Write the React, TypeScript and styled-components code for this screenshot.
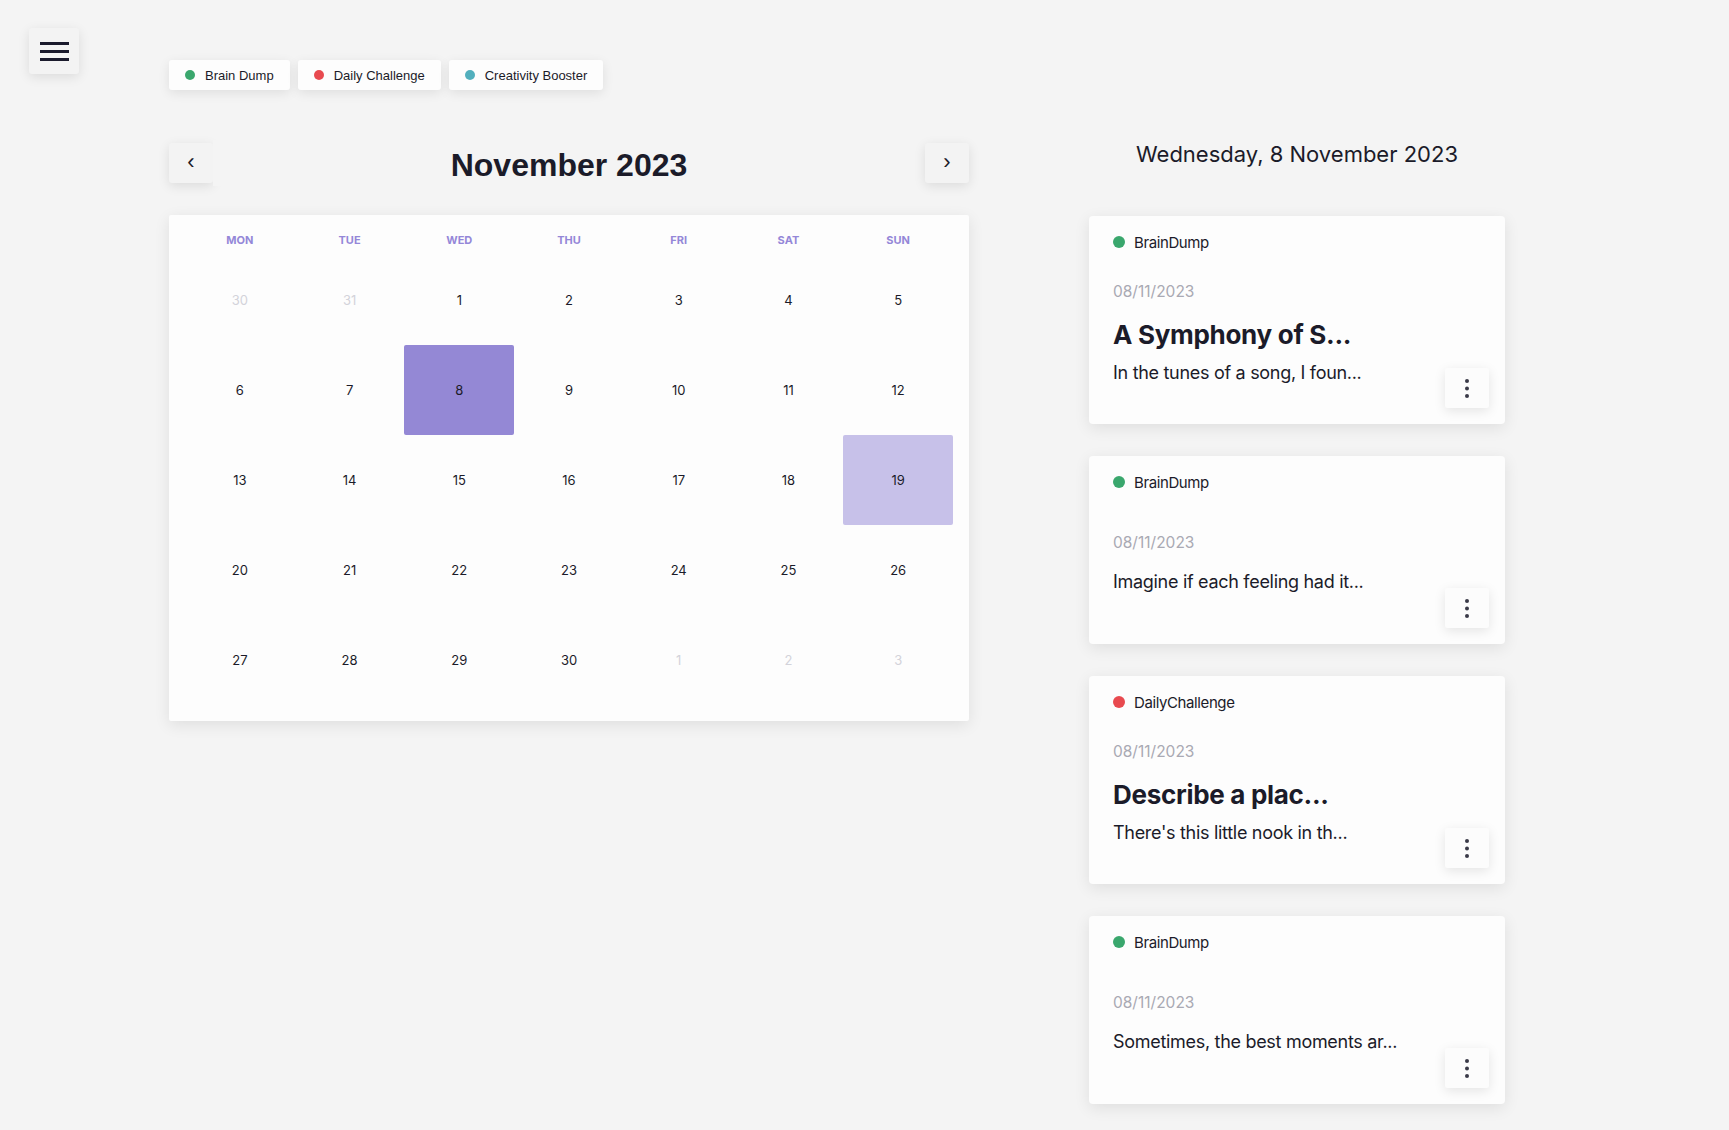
import React from "react";
import styled, { createGlobalStyle } from "styled-components";

const GlobalStyle = createGlobalStyle`
  html, body { margin: 0; padding: 0; background: #f4f4f4; }
  body { font-family: Inter, "Liberation Sans", Arial, sans-serif; color: #1b1b29; }
  * { box-sizing: border-box; }
`;

const Page = styled.div`
  display: flex;
  align-items: flex-start;
  min-height: 1130px;
  padding: 28px 0 0 29px;
`;

const MenuButton = styled.button`
  width: 50px;
  height: 46px;
  border: none;
  border-radius: 3px;
  background: #f3f3f3;
  box-shadow: 0 3px 12px rgba(0, 0, 0, 0.1);
  display: flex;
  flex-direction: column;
  align-items: center;
  justify-content: center;
  gap: 5px;
  padding: 0;
  cursor: pointer;
`;

const MenuBar = styled.span`
  display: block;
  width: 29px;
  height: 3px;
  background: #1a1a2c;
`;

const Main = styled.div`
  margin-left: 90px;
  padding-top: 32px;
  display: flex;
  flex-direction: column;
`;

const PillRow = styled.div`
  display: flex;
  gap: 8px;
`;

const Pill = styled.div`
  height: 30px;
  padding: 0 16px;
  display: flex;
  align-items: center;
  gap: 10px;
  background: #fdfdfd;
  border-radius: 3px;
  box-shadow: 0 3px 12px rgba(0, 0, 0, 0.09);
  font-family: "Liberation Sans", Arial, sans-serif;
  font-size: 13px;
  color: #1b1b29;
`;

const Dot = styled.span<{ $color: string; $size: number }>`
  width: ${(p) => p.$size}px;
  height: ${(p) => p.$size}px;
  border-radius: 50%;
  background: ${(p) => p.$color};
  flex-shrink: 0;
`;

const Content = styled.div`
  display: flex;
  gap: 120px;
  margin-top: 53px;
  align-items: flex-start;
`;

const LeftColumn = styled.div`
  width: 800px;
  display: flex;
  flex-direction: column;
`;

const MonthHeader = styled.div`
  display: flex;
  align-items: center;
  height: 40px;
`;

const NavButton = styled.button`
  width: 44px;
  height: 40px;
  border: none;
  border-radius: 3px;
  background: #f3f3f3;
  box-shadow: 0 3px 12px rgba(0, 0, 0, 0.1);
  font-family: "Liberation Sans", Arial, sans-serif;
  font-size: 22px;
  color: #1b1b29;
  display: flex;
  align-items: center;
  justify-content: center;
  padding: 0 0 3px;
  cursor: pointer;
  flex-shrink: 0;
`;

const MonthTitle = styled.h1`
  flex: 1;
  margin: 0 20px 0 0;
  padding-left: 20px;
  height: 46px;
  display: flex;
  align-items: center;
  justify-content: center;
  position: relative;
  z-index: 1;
  background: #f4f4f4;
  font-family: "Liberation Sans", Arial, sans-serif;
  font-weight: 700;
  font-size: 32px;
  color: #1b1b29;
  padding-top: 4px;
`;

const CalendarCard = styled.div`
  margin-top: 32px;
  background: #fdfdfd;
  border-radius: 2px;
  box-shadow: 0 4px 16px rgba(0, 0, 0, 0.09);
  padding: 16px;
`;

const WeekRow = styled.div`
  display: grid;
  grid-template-columns: repeat(7, 1fr);
  margin-bottom: 6px;
`;

const WeekDay = styled.div`
  height: 18px;
  line-height: 18px;
  text-align: center;
  font-size: 11px;
  font-weight: 700;
  color: #9487d8;
  text-transform: uppercase;
`;

const DayGrid = styled.div`
  display: grid;
  grid-template-columns: repeat(7, 1fr);
  grid-auto-rows: 90px;
`;

const DayCell = styled.div<{ $state: "normal" | "faded" | "selected" | "marked" }>`
  display: flex;
  align-items: center;
  justify-content: center;
  font-size: 13px;
  border-radius: 2px;
  color: ${(p) => (p.$state === "faded" ? "#d3d3da" : "#1b1b29")};
  background: ${(p) =>
    p.$state === "selected" ? "#9488d5" : p.$state === "marked" ? "#c7c1e9" : "transparent"};
`;

const RightColumn = styled.div`
  width: 416px;
  display: flex;
  flex-direction: column;
`;

const DayTitle = styled.h2`
  margin: 0 0 53px;
  height: 20px;
  line-height: 20px;
  text-align: center;
  font-size: 22px;
  font-weight: 400;
  color: #1b1b29;
  padding-top: 1px;
`;

const EntryList = styled.div`
  display: flex;
  flex-direction: column;
  gap: 32px;
`;

const EntryCard = styled.div`
  background: #fdfdfd;
  border-radius: 4px;
  box-shadow: 0 4px 16px rgba(0, 0, 0, 0.09);
  padding: 16px 16px 16px 24px;
  display: flex;
  flex-direction: column;
`;

const TagRow = styled.div`
  display: flex;
  align-items: center;
  gap: 9px;
  height: 20px;
  font-size: 15px;
  color: #1b1b29;
  letter-spacing: -0.4px;
`;

const EntryDate = styled.div<{ $gap: number }>`
  margin-top: ${(p) => p.$gap}px;
  height: 20px;
  line-height: 20px;
  font-size: 15.5px;
  color: #a9a9b3;
`;

const EntryTitle = styled.h3`
  margin: 18px 0 0;
  height: 30px;
  line-height: 30px;
  font-size: 26px;
  font-weight: 700;
  color: #1b1b29;
  letter-spacing: -0.3px;
`;

const BodyRow = styled.div<{ $top: number }>`
  margin-top: ${(p) => p.$top}px;
  display: flex;
  align-items: flex-end;
  justify-content: space-between;
`;

const EntryText = styled.p<{ $bottom: number }>`
  margin: 0 0 ${(p) => p.$bottom}px;
  height: 22px;
  line-height: 22px;
  font-size: 18px;
  color: #1b1b29;
  letter-spacing: -0.3px;
`;

const KebabButton = styled.button`
  width: 44px;
  height: 40px;
  border: none;
  border-radius: 2px;
  background: #fcfcfc;
  box-shadow: 0 3px 12px rgba(0, 0, 0, 0.1);
  display: flex;
  align-items: center;
  justify-content: center;
  padding: 0;
  cursor: pointer;
  flex-shrink: 0;
`;

const categories = [
  { label: "Brain Dump", color: "#3aa76d" },
  { label: "Daily Challenge", color: "#e84a4f" },
  { label: "Creativity Booster", color: "#52afbd" },
];

const weekDays = ["Mon", "Tue", "Wed", "Thu", "Fri", "Sat", "Sun"];

type Day = { n: number; faded?: boolean };
const days: Day[] = [
  { n: 30, faded: true },
  { n: 31, faded: true },
  ...Array.from({ length: 30 }, (_, i) => ({ n: i + 1 })),
  { n: 1, faded: true },
  { n: 2, faded: true },
  { n: 3, faded: true },
];

const entries = [
  { tag: "BrainDump", color: "#3aa76d", title: "A Symphony of S...", text: "In the tunes of a song, I foun..." },
  { tag: "BrainDump", color: "#3aa76d", title: "", text: "Imagine if each feeling had it..." },
  { tag: "DailyChallenge", color: "#e84a4f", title: "Describe a plac...", text: "There's this little nook in th..." },
  { tag: "BrainDump", color: "#3aa76d", title: "", text: "Sometimes, the best moments ar..." },
];

const KebabIcon = () => (
  <svg width="6" height="20" viewBox="0 0 6 20">
    <circle cx="3" cy="3" r="2" fill="#3a3a48" />
    <circle cx="3" cy="10.5" r="2" fill="#3a3a48" />
    <circle cx="3" cy="18" r="2" fill="#3a3a48" />
  </svg>
);

export default function App() {
  return (
    <>
      <GlobalStyle />
      <Page>
        <MenuButton aria-label="menu">
          <MenuBar />
          <MenuBar />
          <MenuBar />
        </MenuButton>
        <Main>
          <PillRow>
            {categories.map((c) => (
              <Pill key={c.label}>
                <Dot $color={c.color} $size={10} />
                {c.label}
              </Pill>
            ))}
          </PillRow>
          <Content>
            <LeftColumn>
              <MonthHeader>
                <NavButton aria-label="previous">‹</NavButton>
                <MonthTitle>November 2023</MonthTitle>
                <NavButton aria-label="next">›</NavButton>
              </MonthHeader>
              <CalendarCard>
                <WeekRow>
                  {weekDays.map((d) => (
                    <WeekDay key={d}>{d}</WeekDay>
                  ))}
                </WeekRow>
                <DayGrid>
                  {days.map((d, i) => {
                    const state = d.faded
                      ? "faded"
                      : d.n === 8
                      ? "selected"
                      : d.n === 19
                      ? "marked"
                      : "normal";
                    return (
                      <DayCell key={i} $state={state}>
                        {d.n}
                      </DayCell>
                    );
                  })}
                </DayGrid>
              </CalendarCard>
            </LeftColumn>
            <RightColumn>
              <DayTitle>Wednesday, 8 November 2023</DayTitle>
              <EntryList>
                {entries.map((e, i) => (
                  <EntryCard key={i}>
                    <TagRow>
                      <Dot $color={e.color} $size={12} />
                      {e.tag}
                    </TagRow>
                    <EntryDate $gap={e.title ? 30 : 41}>08/11/2023</EntryDate>
                    {e.title && <EntryTitle>{e.title}</EntryTitle>}
                    <BodyRow $top={e.title ? 12 : 18}>
                      <EntryText $bottom={e.title ? 24 : 35}>{e.text}</EntryText>
                      <KebabButton aria-label="more">
                        <KebabIcon />
                      </KebabButton>
                    </BodyRow>
                  </EntryCard>
                ))}
              </EntryList>
            </RightColumn>
          </Content>
        </Main>
      </Page>
    </>
  );
}
